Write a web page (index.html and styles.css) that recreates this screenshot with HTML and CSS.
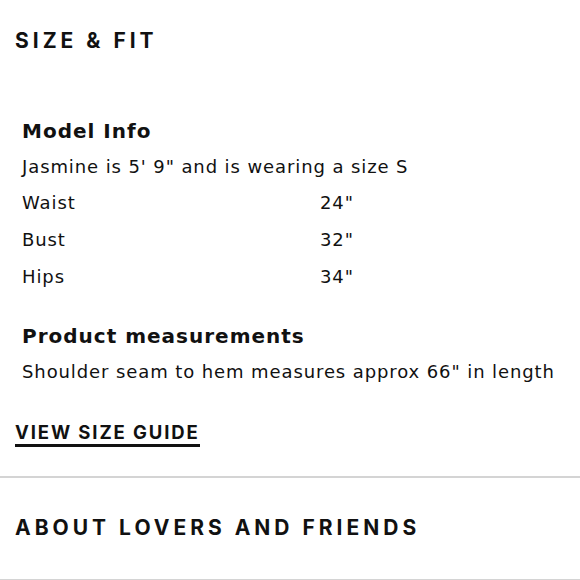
FILE: index.html
```html
<!DOCTYPE html>
<html>
<head>
<meta charset="utf-8">
<link rel="stylesheet" href="styles.css">
</head>
<body>
<section class="panel">
  <h2 class="panel-title">SIZE &amp; FIT</h2>
  <div class="panel-body">
    <h3 class="sub-title">Model Info</h3>
    <p class="line">Jasmine is 5' 9" and is wearing a size S</p>
    <div class="measure-row"><span class="m-label">Waist</span><span class="m-value">24"</span></div>
    <div class="measure-row"><span class="m-label">Bust</span><span class="m-value">32"</span></div>
    <div class="measure-row"><span class="m-label">Hips</span><span class="m-value">34"</span></div>
    <h3 class="sub-title sub-title--gap">Product measurements</h3>
    <p class="line">Shoulder seam to hem measures approx 66" in length</p>
  </div>
  <a class="guide-link" href="#">VIEW SIZE GUIDE</a>
</section>
<section class="panel panel--about">
  <h2 class="panel-title">ABOUT LOVERS AND FRIENDS</h2>
</section>
</body>
</html>
```
FILE: styles.css
```css
* { box-sizing: border-box; }
html, body { margin: 0; padding: 0; background: #fff; }
body {
  font-family: "Inter", "Liberation Sans", sans-serif;
  color: #111;
  width: 580px;
  overflow: hidden;
}
.panel {
  border-bottom: 2px solid #d4d4d4;
  padding: 28px 0 29px 15px;
}
.panel-title {
  margin: 0;
  font-size: 21px;
  font-weight: 700;
  letter-spacing: 4px;
  line-height: 26px;
}
.panel-body {
  padding: 62px 0 0 7px;
}
.sub-title {
  margin: 0;
  font-family: "DejaVu Sans", sans-serif;
  font-size: 20px;
  font-weight: 700;
  letter-spacing: 1px;
  line-height: 30px;
}
.sub-title--gap { margin-top: 26px; }
.line {
  margin: 3px 0 0;
  font-family: "DejaVu Sans", sans-serif;
  font-size: 18px;
  letter-spacing: 0.9px;
  line-height: 35px;
}
.measure-row {
  display: grid;
  grid-template-columns: 298px 1fr;
  font-family: "DejaVu Sans", sans-serif;
  font-size: 18px;
  letter-spacing: 0.9px;
  line-height: 37px;
}
.guide-link {
  display: inline-block;
  margin-top: 31px;
  color: #111;
  text-decoration: none;
  font-size: 18.5px;
  font-weight: 700;
  letter-spacing: 1.9px;
  line-height: 24px;
  border-bottom: 3px solid #111;
}
.panel--about {
  padding-top: 37px;
  padding-bottom: 38px;
}
```
